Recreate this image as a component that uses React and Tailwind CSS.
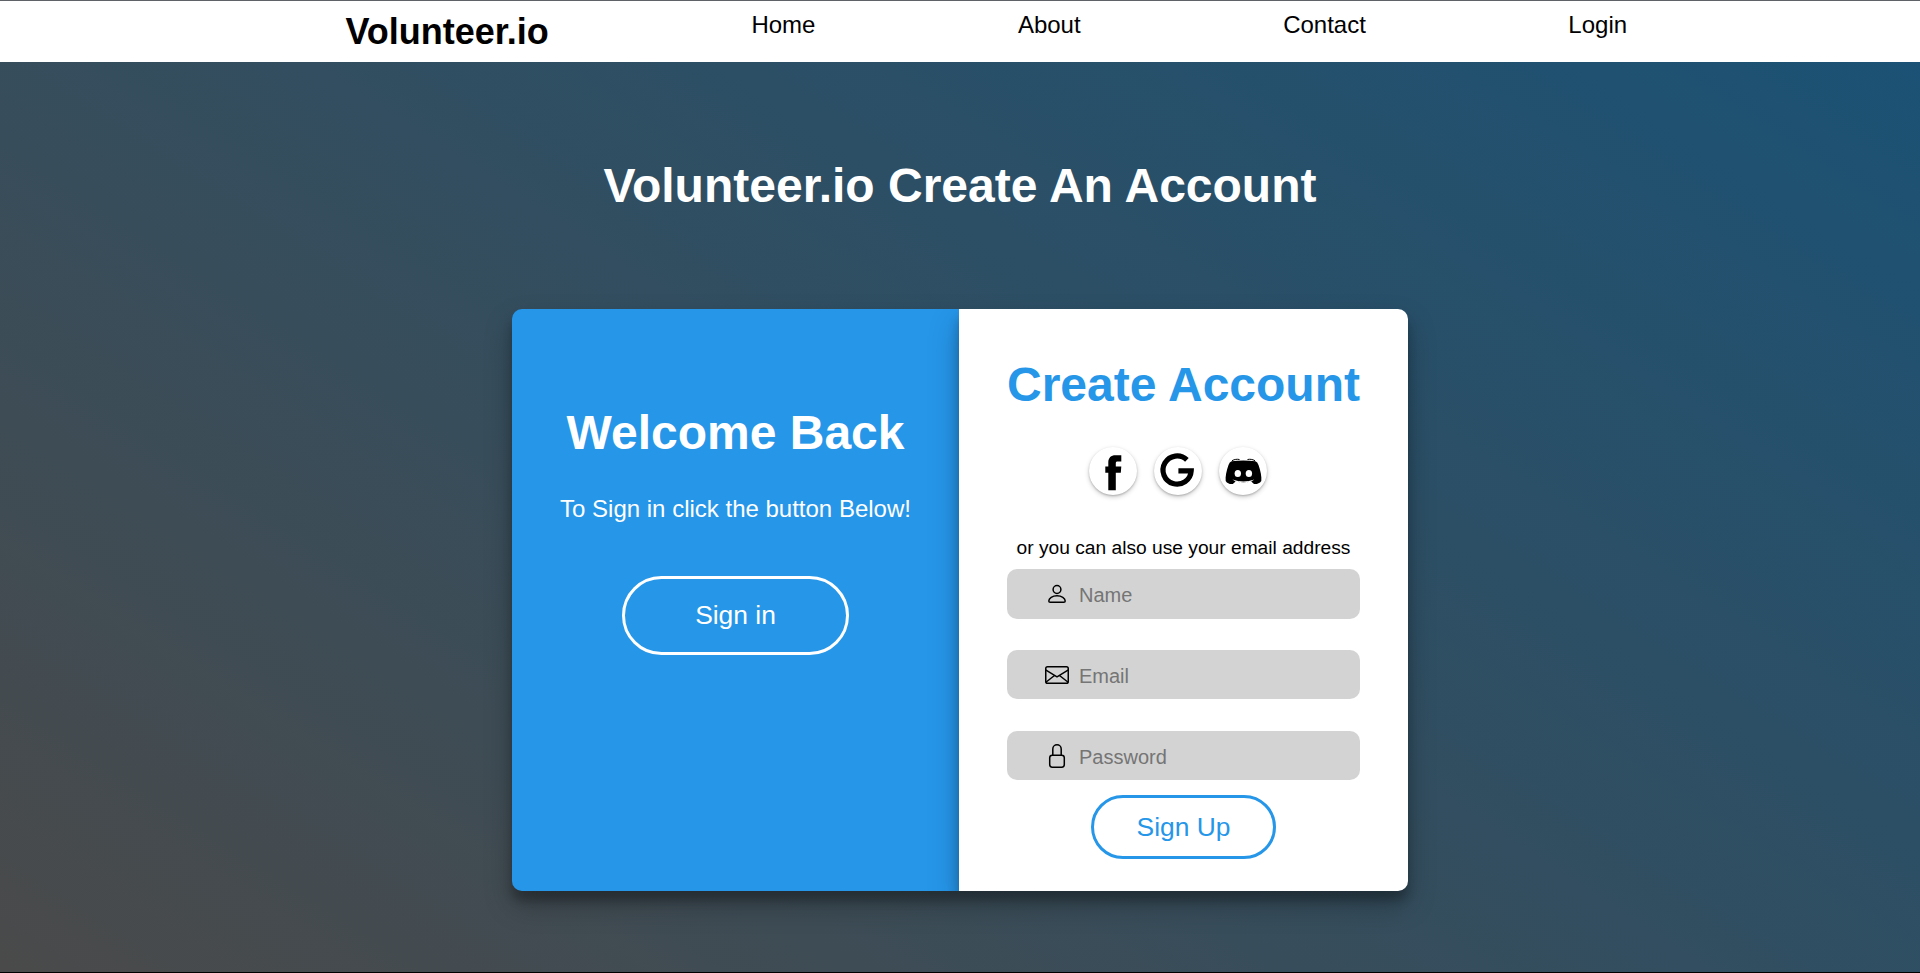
import React from "react";

const navLinks = ["Home", "About", "Contact", "Login"];

const FacebookIcon = () => (
  <svg className="w-12 h-12" viewBox="0 0 48 48" fill="#000">
    <path d="M32.300 8.200v6.300h-3.700c-1.300 0-1.800.6-1.800 1.800v3.200h5.500l-.5 6.200h-5v17.500h-7.500V25.700h-3v-6.200h3v-4c0-4.800 2.700-7.300 7.200-7.300z" />
  </svg>
);

const GoogleIcon = () => (
  <svg className="w-12 h-12" viewBox="0 0 48 48" fill="none" stroke="#000" strokeWidth="5.200">
    <path d="M32.900 12.900A14.100 14.100 0 1 0 37.200 23.900H24.400" />
  </svg>
);

const DiscordIcon = () => (
  <svg className="w-12 h-12" viewBox="0 0 48 48">
    <path
      d="M12.600 14.200Q24 12.600 36.400 14.200Q38.500 15 39.500 18C41.500 23.500 42.800 29.500 42.300 34C40.500 36.600 37.500 37.400 35 37L32.200 34.600L35.400 32.400Q24.400 36.400 13.400 32.400L16.600 34.600L13.800 37C11.200 37.400 8.300 36.600 6.700 34C6.200 29.500 7.500 23.500 9.500 18Q10.500 15 12.600 14.200Z"
      fill="#000"
    />
    <path d="M14.500 33.300Q24.400 38 34.500 33.300L31 34.600Q24.400 36.600 18 34.600Z" fill="#000" />
    <path d="M13 13.700C15.500 12.300 18 12 20.500 12.500M36 13.700C33.500 12.300 31 12 28.500 12.500" stroke="#000" strokeWidth="1" fill="none" />
    <ellipse cx="18.800" cy="26.600" rx="3.200" ry="3.500" fill="#fff" />
    <ellipse cx="29.900" cy="26.600" rx="3.200" ry="3.500" fill="#fff" />
  </svg>
);

const iconProps = {
  className: "w-6 h-6 shrink-0",
  viewBox: "0 0 24 24",
  fill: "none",
  stroke: "#000",
  strokeWidth: 1.5,
  strokeLinejoin: "round",
  strokeLinecap: "round",
};

const PersonIcon = () => (
  <svg {...iconProps}>
    <circle cx="12" cy="7.500" r="3.900" />
    <path d="M3.800 19c0-2.800 3.600-5.200 8.200-5.200s8.200 2.400 8.200 5.200c0 1-.6 1.300-1.400 1.300H5.200c-.8 0-1.400-.3-1.400-1.300z" />
  </svg>
);

const MailIcon = () => (
  <svg {...iconProps}>
    <rect x=".75" y="3.700" width="22.500" height="16.600" rx="1.800" />
    <path d="M1 7.200l11 6.600 11-6.600M1.200 19l8.300-6.500M22.800 19l-8.300-6.500" />
  </svg>
);

const LockIcon = () => (
  <svg {...iconProps}>
    <rect x="4.700" y="11.200" width="14.600" height="12" rx="2.600" />
    <path d="M7.800 11V5a4.200 4.200 0 0 1 8.400 0v6" />
  </svg>
);

const socials = [
  { name: "Facebook", Icon: FacebookIcon },
  { name: "Google", Icon: GoogleIcon },
  { name: "Discord", Icon: DiscordIcon },
];

const Field = ({ icon: Icon, type, placeholder, className }) => (
  <label className={`flex items-center rounded-[10px] bg-[#d3d3d3] pl-[38px] ${className}`}>
    <Icon />
    <input
      type={type}
      placeholder={placeholder}
      className="ml-[10px] w-[220px] bg-transparent pt-[2px] text-[20px] outline-none placeholder:text-[#757575]"
    />
  </label>
);

const Navbar = () => (
  <nav className="flex h-[62px] items-start gap-[202.5px] border-t border-[#5f6368] bg-white pl-[345.5px] text-black">
    <a href="#" className="mt-[10px] text-4xl font-bold leading-[42px]">Volunteer.io</a>
    <ul className="mt-[10px] flex gap-[202.5px] text-2xl leading-7">
      {navLinks.map((link) => (
        <li key={link}>
          <a href="#">{link}</a>
        </li>
      ))}
    </ul>
  </nav>
);

const App = () => {
  return (
    <div className="flex h-[973px] flex-col overflow-hidden border-b border-black bg-[linear-gradient(33deg,#4a4a4a,#1a5276)] font-['Liberation_Sans',Arial,sans-serif]">
      <Navbar />

      <h1 className="mt-24 text-center text-5xl font-bold leading-[56px] text-white">
        Volunteer.io Create An Account
      </h1>

      <main className="mx-auto mt-[95px] flex h-[582px] w-[896px] overflow-hidden rounded-[10px] shadow-[0_14px_28px_rgba(0,0,0,0.25),0_10px_10px_rgba(0,0,0,0.22)]">
        {/* Sign in side */}
        <section className="flex w-[447px] flex-col items-center bg-[#2696e9] text-white">
          <h2 className="mt-24 text-5xl font-bold leading-[56px]">Welcome Back</h2>
          <p className="mt-[34px] text-2xl leading-7">To Sign in click the button Below!</p>
          <button className="mt-[53px] h-[79px] w-[227px] rounded-[40px] border-3 border-white text-[26.4px]">
            Sign in
          </button>
        </section>

        {/* Sign up side */}
        <section className="flex w-[449px] flex-col bg-white px-12 shadow-[0_14px_28px_rgba(0,0,0,0.25),0_10px_10px_rgba(0,0,0,0.22)]">
          <h2 className="mt-12 whitespace-nowrap text-center text-5xl font-bold leading-[56px] text-[#2696e9]">
            Create Account
          </h2>
          <div className="mt-[34px] flex gap-[17px] pl-[82px]">
            {socials.map(({ name, Icon }) => (
              <button
                key={name}
                aria-label={name}
                className="h-12 w-12 rounded-full shadow-[0_2px_5px_rgba(0,0,0,0.2),0_1px_2px_rgba(0,0,0,0.2)]"
              >
                <Icon />
              </button>
            ))}
          </div>
          <p className="mt-[42px] whitespace-nowrap text-center text-[19.2px] leading-[22px] text-black">
            or you can also use your email address
          </p>
          <form className="mt-[10px] flex flex-col">
            <Field icon={PersonIcon} type="text" placeholder="Name" className="h-[50px]" />
            <Field icon={MailIcon} type="email" placeholder="Email" className="mt-[31px] h-[49px]" />
            <Field icon={LockIcon} type="password" placeholder="Password" className="mt-8 h-[49px]" />
            <button
              type="button"
              className="mt-[15px] h-16 w-[185px] self-center rounded-[32px] border-3 border-[#2696e9] pt-px text-[26.4px] text-[#2696e9]"
            >
              Sign Up
            </button>
          </form>
        </section>
      </main>
    </div>
  );
};

export default App;
